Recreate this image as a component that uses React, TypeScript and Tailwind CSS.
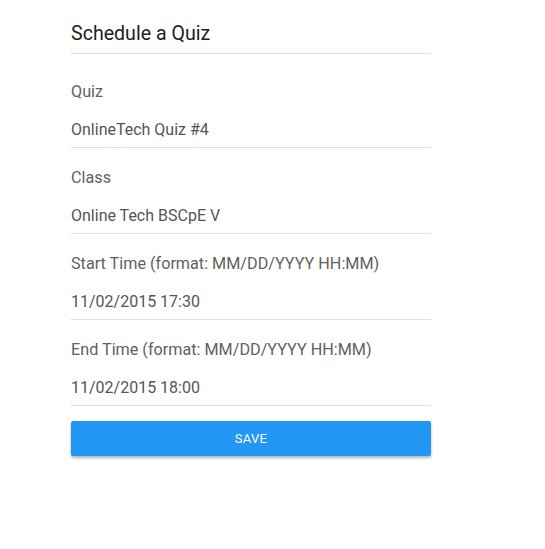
import React from 'react';

interface FieldProps {
  label: string;
  value: string;
  first?: boolean;
}

function Field({ label, value, first }: FieldProps) {
  return (
    <div className={`${first ? 'pt-[26px]' : 'pt-[18px]'} border-b border-[#e0e0e0]`}>
      <div className="text-[16.2px] leading-[24px] text-[#616161]">{label}</div>
      <div className="mt-[14px] pb-[5px] text-[16px] leading-[24px] text-[#555555]">{value}</div>
    </div>
  );
}

export default function App() {
  const fields = [
    { label: 'Quiz', value: 'OnlineTech Quiz #4' },
    { label: 'Class', value: 'Online Tech BSCpE V' },
    { label: 'Start Time (format: MM/DD/YYYY HH:MM)', value: '11/02/2015 17:30' },
    { label: 'End Time (format: MM/DD/YYYY HH:MM)', value: '11/02/2015 18:00' },
  ];

  return (
    <div className="min-h-[549px] bg-white font-['Roboto',sans-serif]">
      <div className="ml-[71px] w-[360px] pt-[20px]">
        <h1 className="pb-[5px] border-b border-[#e0e0e0] text-[19.6px] leading-[28px] text-[#212121] font-normal">
          Schedule a Quiz
        </h1>
        {fields.map((f, i) => (
          <Field key={f.label} label={f.label} value={f.value} first={i === 0} />
        ))}
        <button
          type="button"
          className="mt-[15px] w-full h-[35px] rounded-[2px] bg-[#2196f3] text-white text-[13px] tracking-[0.3px] uppercase shadow-[0_2px_3px_rgba(0,0,0,0.3)]"
        >
          Save
        </button>
      </div>
    </div>
  );
}
